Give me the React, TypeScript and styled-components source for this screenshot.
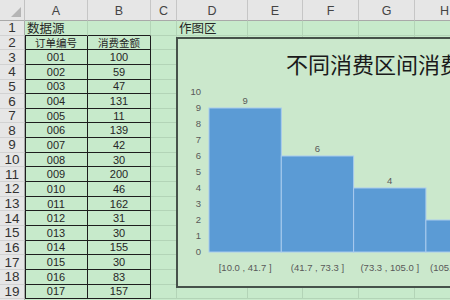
import styled, { createGlobalStyle } from "styled-components";

const GlobalStyle = createGlobalStyle`
  html, body {
    margin: 0;
    padding: 0;
    background: #c7eacb;
    overflow: hidden;
  }
  body {
    font-family: "Liberation Sans", "Noto Sans CJK SC", sans-serif;
  }
`;

const columns = ["A", "B", "C", "D", "E", "F", "G", "H"];

const orders: [string, number][] = [
  ["001", 100],
  ["002", 59],
  ["003", 47],
  ["004", 131],
  ["005", 11],
  ["006", 139],
  ["007", 42],
  ["008", 30],
  ["009", 200],
  ["010", 46],
  ["011", 162],
  ["012", 31],
  ["013", 30],
  ["014", 155],
  ["015", 30],
  ["016", 83],
  ["017", 157],
];

const bins = [
  { label: "[10.0 , 41.7 ]", count: 9 },
  { label: "(41.7 , 73.3 ]", count: 6 },
  { label: "(73.3 , 105.0 ]", count: 4 },
  { label: "(105.0 , 136.7 ]", count: 2 },
];

// plot geometry (svg coordinates)
const ZERO_Y = 165;
const UNIT = 16;
const BAR_X = 31;
const BAR_W = 72.3;

type CellProps = {
  $table?: boolean;
  $edge?: boolean;
  $topRule?: boolean;
  $align?: "left" | "center";
  $size?: number;
};

export default function App() {
  const rows: { a: string; b: string; head?: boolean }[] = [
    { a: "订单编号", b: "消费金额", head: true },
    ...orders.map(([id, amount]) => ({ a: id, b: String(amount) })),
  ];

  return (
    <>
      <GlobalStyle />
      <Sheet>
        <Corner />
        {columns.map((c) => (
          <ColHead key={c}>{c}</ColHead>
        ))}

        <RowHead>1</RowHead>
        <Cell $align="left" $size={12.5} $topRule>
          数据源
        </Cell>
        <Cell $topRule />
        <Cell />
        <Cell $align="left" $size={12.5}>
          作图区
        </Cell>
        <Cell />
        <Cell />
        <Cell />
        <Cell />

        {rows.map((r, i) => (
          <Row key={i} index={i + 2} a={r.a} b={r.b} head={r.head} />
        ))}

        <Chart>
          <ChartTitle>不同消费区间消费人数分布</ChartTitle>
          <Plot width={300} height={199}>
            {Array.from({ length: 11 }, (_, v) => (
              <AxisText key={v} x={23} y={ZERO_Y - v * UNIT} textAnchor="end" dominantBaseline="middle">
                {v}
              </AxisText>
            ))}
            {bins.map((b, i) => {
              const x = BAR_X + i * BAR_W;
              const h = b.count * UNIT;
              return (
                <g key={b.label}>
                  <rect x={x} y={ZERO_Y - h} width={BAR_W} height={h} fill="#5b9bd5" stroke="#a9cbee" strokeWidth={1} />
                  <AxisText x={x + BAR_W / 2} y={ZERO_Y - h - 7} textAnchor="middle" dominantBaseline="middle">
                    {b.count}
                  </AxisText>
                  <AxisText x={x + BAR_W / 2} y={181} textAnchor="middle" dominantBaseline="middle">
                    {b.label}
                  </AxisText>
                </g>
              );
            })}
          </Plot>
        </Chart>
      </Sheet>
    </>
  );
}

const Row = ({ index, a, b, head }: { index: number; a: string; b: string; head?: boolean }) => {
  const size = head ? 10.5 : 11;
  return (
    <>
      <RowHead>{index}</RowHead>
      <Cell $table $edge $size={size}>
        {a}
      </Cell>
      <Cell $table $size={size}>
        {b}
      </Cell>
      <Cell />
      <Cell />
      <Cell />
      <Cell />
      <Cell />
      <Cell />
    </>
  );
};

const Sheet = styled.div`
  position: relative;
  display: grid;
  grid-template-columns: 25px 63px 63px 26px 71px 55px 56px 56px 60px;
  grid-template-rows: 21px;
  grid-auto-rows: 14.65px;
  width: 450px;
  height: 300px;
  overflow: hidden;
  background: linear-gradient(to right, #e6e6e6 0 24px, #a9a9a9 24px 25px, #c7eacb 25px);
`;

const Corner = styled.div`
  position: relative;
  box-sizing: border-box;
  background: #e6e6e6;
  border-right: 1px solid #c2c2c2;
  border-bottom: 1px solid #a9a9a9;

  &::after {
    content: "";
    position: absolute;
    right: 3px;
    bottom: 3px;
    width: 0;
    height: 0;
    border-style: solid;
    border-width: 0 0 10px 10px;
    border-color: transparent transparent #b5b5b5 transparent;
  }
`;

const ColHead = styled.div`
  box-sizing: border-box;
  display: flex;
  align-items: center;
  justify-content: center;
  padding-top: 2px;
  background: #e6e6e6;
  border-right: 1px solid #c6c6c6;
  border-bottom: 1px solid #a9a9a9;
  color: #444;
  font-size: 12.5px;
`;

const RowHead = styled.div`
  box-sizing: border-box;
  display: flex;
  align-items: center;
  justify-content: center;
  background: #e6e6e6;
  border-right: 1px solid #a9a9a9;
  border-bottom: 1px solid #d2d2d2;
  color: #333;
  font-size: 13.5px;
`;

const Cell = styled.div<CellProps>`
  box-sizing: border-box;
  display: flex;
  align-items: center;
  justify-content: ${(p) => (p.$align === "left" ? "flex-start" : "center")};
  padding: 0 2px;
  min-width: 0;
  white-space: nowrap;
  overflow: visible;
  color: #262626;
  font-size: ${(p) => p.$size ?? 11}px;
  border-right: 1px solid ${(p) => (p.$table ? "#1e1e1e" : "#b3d4b7")};
  border-bottom: 1px solid ${(p) => (p.$table || p.$topRule ? "#1e1e1e" : "#b3d4b7")};
  box-shadow: ${(p) => (p.$edge ? "inset 1px 0 0 #1e1e1e" : "none")};
`;

const Chart = styled.div`
  position: absolute;
  left: 176px;
  top: 37px;
  width: 290px;
  height: 251px;
  box-sizing: border-box;
  border: 2px solid #46524a;
  background: #cbe8cc;
  display: flex;
  flex-direction: column;
  overflow: hidden;
`;

const ChartTitle = styled.div`
  height: 48px;
  display: flex;
  align-items: center;
  padding-left: 108px;
  white-space: nowrap;
  font-family: "Noto Sans CJK SC", "Liberation Sans", sans-serif;
  font-size: 22px;
  color: #1a1a1a;
`;

const Plot = styled.svg`
  display: block;
  flex: none;
  overflow: visible;
`;

const AxisText = styled.text`
  font-family: "Liberation Sans", sans-serif;
  font-size: 9.5px;
  fill: #595959;
`;
